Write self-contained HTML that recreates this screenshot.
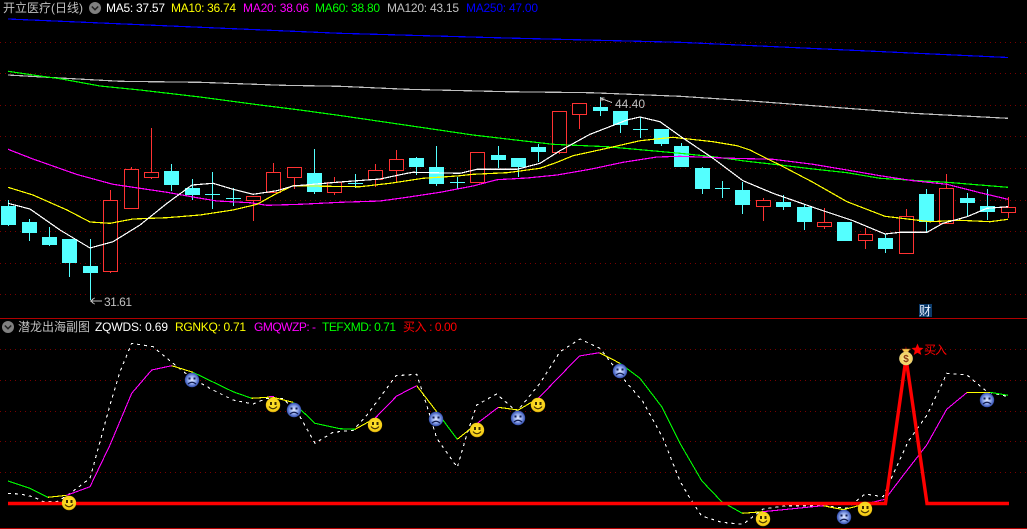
<!DOCTYPE html>
<html>
<head>
<meta charset="utf-8">
<style>
html,body{margin:0;padding:0;background:#000;width:1027px;height:529px;overflow:hidden}
svg{display:block;position:absolute;left:0;top:0}
text{font-family:"Liberation Sans","WenQuanYi Zen Hei","Noto Sans CJK SC",sans-serif;font-size:12px}
.ma{fill:none;stroke-width:1.2;shape-rendering:crispEdges}
</style>
</head>
<body>
<svg width="1027" height="529" viewBox="0 0 1027 529" xmlns="http://www.w3.org/2000/svg">
<defs>
<radialGradient id="gs" cx="50%" cy="45%" r="58%"><stop offset="0" stop-color="#ffe430"/><stop offset=".8" stop-color="#f6cf18"/><stop offset="1" stop-color="#c09008"/></radialGradient>
<radialGradient id="gb" cx="50%" cy="50%" r="52%"><stop offset="0" stop-color="#e0e8ff"/><stop offset=".5" stop-color="#94acee"/><stop offset="1" stop-color="#2a46aa"/></radialGradient>
<radialGradient id="gm" cx="50%" cy="50%" r="55%"><stop offset="0" stop-color="#fff0a0"/><stop offset=".8" stop-color="#f0d060"/><stop offset="1" stop-color="#fff8d0"/></radialGradient>
<g id="smile"><circle r="7.2" fill="url(#gs)"/><rect x="-3" y="-3" width="2" height="3" fill="#3a2a00"/><rect x="1.5" y="-3" width="2" height="3" fill="#3a2a00"/><path d="M-4 1.5Q0 6 4 1.5" fill="none" stroke="#4a3600" stroke-width="1.2"/></g>
<g id="sad"><circle r="7.2" fill="url(#gb)"/><rect x="-3.5" y="-2.5" width="2" height="2" fill="#101c50"/><rect x="1.5" y="-2.5" width="2" height="2" fill="#101c50"/><path d="M-4 4Q0 0.5 4 4" fill="none" stroke="#101c50" stroke-width="1.2"/></g>
</defs>

<!-- grid -->
<g stroke="#7a0000" stroke-width="1" stroke-dasharray="1 4" shape-rendering="crispEdges">
<path d="M0 42.5H1027M0 73.5H1027M0 105.5H1027M0 136.5H1027M0 168.5H1027M0 200.5H1027M0 231.5H1027M0 263.5H1027M0 294.5H1027"/>
<path d="M0 349.5H1027M0 380.5H1027M0 411.5H1027M0 441.5H1027M0 472.5H1027"/>
</g>
<path d="M0 318.5H1027M0 528.5H1027" stroke="#b00000" stroke-width="1" shape-rendering="crispEdges"/>

<!-- cyan candles -->
<path shape-rendering="crispEdges" stroke="#54ffff" fill="none" d="M8.5 200V226M29.5 219V241M49.5 227V246M69.5 239V277M90.5 239V300M171.5 164V191M192.5 179V200M314.5 149V194M416.5 157V175M436.5 146V186M498.5 146V168M518.5 158V177M538.5 144V162M600.5 97V116M620.5 111V133M661.5 129V146M681.5 143V167M702.5 167V194M742.5 182V214M783.5 195V210M804.5 205V230M885.5 234V253M926.5 189V232M967.5 193V217M987.5 189V220M212.5 172V209M233.5 188V206M355.5 174V188M457.5 177V189M640.5 117V138M722.5 181V198"/>
<path shape-rendering="crispEdges" fill="#54ffff" d="M1 206h15v19h-15zM22 222h15v11h-15zM42 237h15v8h-15zM62 239h15v24h-15zM83 266h15v7h-15zM164 171h15v14h-15zM185 188h15v7h-15zM307 173h15v19h-15zM409 158h15v9h-15zM429 167h15v17h-15zM491 155h15v5h-15zM511 158h15v9h-15zM531 147h15v5h-15zM593 107h15v4h-15zM613 111h15v14h-15zM654 129h15v15h-15zM674 146h15v21h-15zM695 168h15v21h-15zM735 190h15v15h-15zM776 202h15v5h-15zM797 207h15v15h-15zM837 222h15v19h-15zM878 238h15v11h-15zM919 194h15v28h-15zM960 198h15v5h-15zM980 206h15v6h-15zM205 194h15v1h-15zM226 198h15v1h-15zM348 183h15v1h-15zM450 182h15v1h-15zM633 129h15v1h-15zM715 188h15v1h-15z"/>

<!-- red candles -->
<path shape-rendering="crispEdges" stroke="#ff3232" fill="none" d="M110.5 190V273M131.5 167V170M151.5 128V179M253.5 196V221M273.5 163V193M294.5 178V189M334.5 177V195M375.5 164V187M396.5 150V182M559.5 153V154M579.5 115V129M763.5 198V221M824.5 208V229M865.5 228V249M906.5 209V216M946.5 174V188M1008.5 197V218"/>
<path shape-rendering="crispEdges" stroke="#ff3232" fill="#000" d="M103.5 200.5h14v71h-14zM124.5 169.5h14v39h-14zM144.5 172.5h14v5h-14zM246.5 196.5h14v4h-14zM266.5 172.5h14v20h-14zM287.5 167.5h14v10h-14zM327.5 182.5h14v10h-14zM368.5 170.5h14v9h-14zM389.5 159.5h14v11h-14zM470.5 152.5h14v30h-14zM552.5 111.5h14v41h-14zM572.5 103.5h14v11h-14zM756.5 200.5h14v6h-14zM817.5 222.5h14v4h-14zM858.5 234.5h14v6h-14zM899.5 216.5h14v37h-14zM939.5 188.5h14v35h-14zM1001.5 207.5h14v5h-14z"/>

<!-- MAs -->
<polyline class="ma" stroke="#0000ff" points="8,19 340,33.3 506,38 680,42.3 1008,57.5"/>
<polyline class="ma" stroke="#c0c0c0" points="8,75 60,78 120,81.3 200,82.3 283,85.3 340,86.3 407,89.3 507,91.7 590,92.7 680,96.3 747,100.7 813,105.7 913,113.3 1008,118.3"/>
<polyline class="ma" stroke="#00ff00" points="8,71.3 40,76 60,78.7 100,86 140,90 200,97 260,105 300,110 340,115.5 407,125.3 473,135 507,139 553,144.3 607,146.7 680,153.3 713,156.7 747,161.3 780,165 813,169 847,172.7 880,178.3 913,180.3 947,182.3 980,185 1008,187.3"/>
<polyline class="ma" stroke="#ff00ff" points="8,149.3 33,159 77,174.5 113,184.3 140,188.3 167,192.3 197,197.7 217,201 250,202.7 267,205.3 300,204.3 340,202.3 380,201 407,197.3 440,192.3 473,186 497,179.7 527,178 557,175 590,169.3 623,162.3 657,157 680,156.3 733,158.3 773,159.3 813,164.3 847,170 880,175.7 913,180.7 947,184.3 980,192.7 1008,199.3"/>
<polyline class="ma" stroke="#ffff00" points="8,187.3 33,195 67,210 90,222 110,223.3 133,219 167,217.7 200,215 233,210 257,204.3 277,193.3 293,185.7 340,186.5 360,186.7 390,183.3 423,178.3 457,176 473,174.3 507,172.7 540,168.3 557,162.3 573,155.7 607,148.3 640,140.7 673,137.3 713,141.7 737,145.7 750,150 763,156.7 780,165 813,182.3 847,201.7 885,216.3 910,219.3 930,221.7 960,220.3 990,221.7 1008,219.3"/>
<polyline class="ma" stroke="#ffffff" points="8,203.3 30,209 60,230 90,248 113,241.7 140,225 167,203.3 192,185 213,183.3 233,189.3 253,194.3 277,190.7 293,186 340,182 380,179 407,173.3 413,172.3 460,173.3 477,169.3 517,169.3 540,163.3 560,150.7 590,134.3 627,120 640,117 660,121.7 680,136 713,158.3 743,180.7 773,193.3 813,207.3 853,220.7 885,234 900,232.3 927,232.3 943,223.3 967,216.7 987,208.3 1008,206.7"/>

<!-- labels in price chart -->
<path d="M90.5 301H102M90.5 301l4-3M90.5 301l4 3" stroke="#c0c0c0" fill="none" stroke-width="1" shape-rendering="crispEdges"/>
<text x="104" y="306" fill="#c0c0c0" textLength="28">31.61</text>
<path d="M600.5 102V98h4M600.5 100l3 0M601 98.5L612 102.5" stroke="#c0c0c0" fill="none" stroke-width="1" shape-rendering="crispEdges"/>
<text x="615" y="108" fill="#c0c0c0" textLength="30">44.40</text>

<!-- cai -->
<rect x="919" y="304" width="13" height="13" fill="#0b3a6a"/>
<text x="919" y="315" fill="#e8f0ff">财</text>

<!-- lower lines -->
<path d="M8 493.3L20 494L33 496.7L43 501.7L57 501.7L68 495L90 478.3L100 441.7L110 405L120 371.7L131.7 343.3L153 346.7L173 363.3L192 378.3L213 390L233 400L253 404L267 398.3L283 398.3L300 416.7L315 443.3L333 432.3L353 430.3L367 415L396 375.7L416.7 374.3L426.7 405L436.7 438.3L457.3 467.3L466.7 435L476.7 405L496.7 394L516.7 411.7L540 383.3L560 351.7L580 339L600 348.3L623 378.3L643 401.7L663 438.3L680 481L690 498.3L701.7 516L721.7 522.3L743 524.3L763 509L786.7 505.7L823 505.7L847 508.3L865 494L883 496.7L908 441.7L927 415L947 373.3L967 375L987 391.7L1008 396.7" fill="none" stroke="#fff" stroke-width="1.1" stroke-dasharray="3 4" shape-rendering="crispEdges"/>
<g fill="none" stroke-width="1.1" shape-rendering="crispEdges">
<path stroke="#00ff00" d="M8 481L30 488.3L48 497.3M193 372.3L233 391.7L251.7 398.3M293 402.3L315 423.3L340 428.7L355 429.3M436.7 411.7L457.3 439.3M620 363.3L640 378.3L661.7 406.7L680 443.3L701.7 480.7L721.7 501.7L742.3 513.3M838 508.5L846 510M990 392.3L1008 395.3"/>
<path stroke="#ffff00" d="M48 497.3L66.7 495.3M171.7 365.7L193 372.3M251.7 398.3L271.7 397L293 402.3M355 429.3L375 418.3M416.7 385.7L436.7 411.7M457.3 439.3L477.3 423.3M498.3 407.3L518.3 410L538.3 398.3M599.3 352.7L620 363.3M742.3 513.3L762.7 511.7M823.3 505.7L843.3 509.7L865 504M966.7 392.7L990 392.3"/>
<path stroke="#ff00ff" d="M66.7 495.3L90 486.7L110 445L131.7 393.3L151.7 370L171.7 365.7M375 418.3L396.7 396L416.7 385.7M477.3 423.3L498.3 407.3M538.3 398.3L559 377L579.3 356L599.3 352.7M762.7 511.7L823.3 505.7M865 504L885 499.3L906 471.7L926.7 445L946.7 409.3L966.7 392.7M269 396.5L274 396.5"/>
</g>
<path d="M8 503.5H885.5L906 358L927 503.5H1009" fill="none" stroke="#ff0000" stroke-width="3.4" stroke-linejoin="miter" stroke-miterlimit="20"/>

<!-- icons -->
<use href="#smile" x="69" y="503"/><use href="#smile" x="273" y="405"/><use href="#smile" x="375" y="425"/><use href="#smile" x="477" y="430"/><use href="#smile" x="538" y="405"/><use href="#smile" x="763" y="519"/><use href="#smile" x="865" y="509"/>
<use href="#sad" x="192" y="380"/><use href="#sad" x="294" y="410"/><use href="#sad" x="436" y="419"/><use href="#sad" x="518" y="418"/><use href="#sad" x="620" y="371"/><use href="#sad" x="844" y="517"/><use href="#sad" x="987" y="400"/>

<!-- money bag -->
<path d="M902 349h8l-2 3h-4z" fill="#f8d050" stroke="#b06020" stroke-width=".6"/>
<circle cx="906" cy="358.5" r="6.8" fill="url(#gm)"/>
<text x="906" y="362" fill="#8a3a10" text-anchor="middle" style="font-size:10px;font-weight:bold">$</text>
<polygon points="917.5,343.5 919.2,347.6 923.5,348 920.2,350.8 921.3,355 917.5,352.7 913.7,355 914.8,350.8 911.5,348 915.8,347.6" fill="#ff0000"/>
<text x="924" y="354" fill="#ff0000" textLength="23">买入</text>

<!-- header top -->
<text x="3" y="12" fill="#c0c0c0" textLength="80">开立医疗(日线)</text>
<circle cx="95" cy="8" r="6" fill="#808080"/><path d="M91.8 6.5L95 9.7L98.2 6.5" fill="none" stroke="#202020" stroke-width="1.5"/>
<text x="106" y="12" fill="#ffffff" textLength="59">MA5: 37.57</text>
<text x="171" y="12" fill="#ffff00" textLength="65">MA10: 36.74</text>
<text x="243" y="12" fill="#ff00ff" textLength="66">MA20: 38.06</text>
<text x="315" y="12" fill="#00ff00" textLength="65">MA60: 38.80</text>
<text x="387" y="12" fill="#c0c0c0" textLength="72">MA120: 43.15</text>
<text x="466" y="12" fill="#0000ff" textLength="72">MA250: 47.00</text>

<!-- header lower -->
<circle cx="8" cy="327" r="6" fill="#808080"/><path d="M4.8 325.5L8 328.7L11.2 325.5" fill="none" stroke="#202020" stroke-width="1.5"/>
<text x="18" y="331" fill="#c0c0c0" textLength="72">潜龙出海副图</text>
<text x="95" y="331" fill="#ffffff" textLength="73">ZQWDS: 0.69</text>
<text x="175" y="331" fill="#ffff00" textLength="71">RGNKQ: 0.71</text>
<text x="254" y="331" fill="#ff00ff" textLength="62">GMQWZP: -</text>
<text x="322" y="331" fill="#00ff00" textLength="74">TEFXMD: 0.71</text>
<text x="403" y="331" fill="#ff0000" textLength="54">买入 : 0.00</text>
</svg>
</body>
</html>
